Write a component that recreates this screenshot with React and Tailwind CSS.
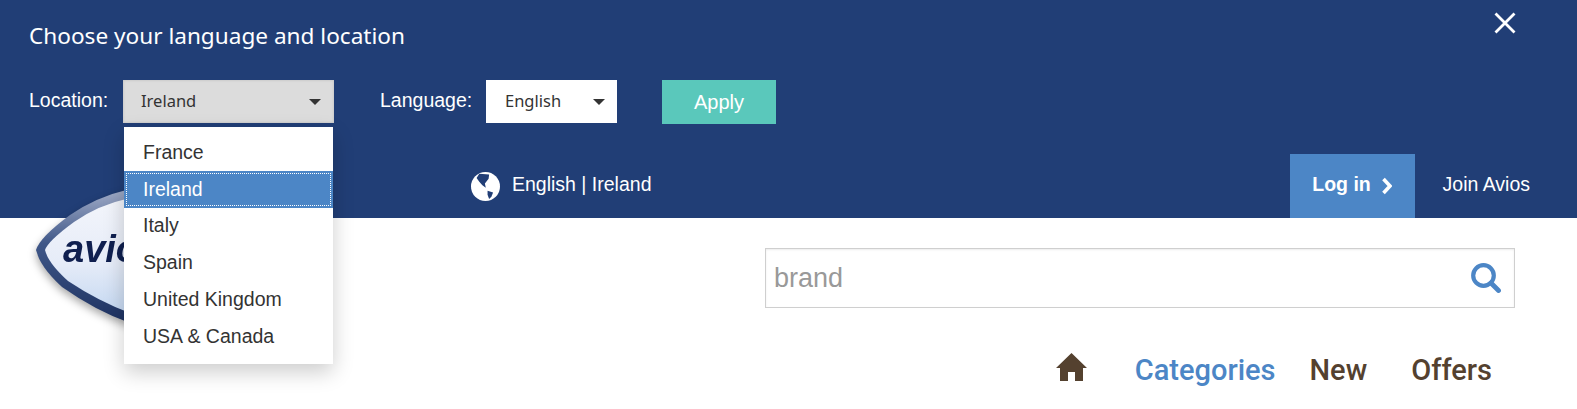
const countries = ["France", "Ireland", "Italy", "Spain", "United Kingdom", "USA & Canada"];

const arial = "font-['Liberation_Sans',Arial,sans-serif]";
const brand = "font-['Noto_Sans',sans-serif]";
const navFont = "font-['Roboto',sans-serif]";

const Caret = () => (
  <span className="w-0 h-0 border-x-[6px] border-x-transparent border-t-[6px] border-t-[#333]"></span>
);

const Globe = () => (
  <svg width="29" height="29" viewBox="0 0 28 28">
    <circle cx="14" cy="14" r="14" fill="#fff" />
    <path d="M8 1.6 L17.5 2.5 L17 6.4 L13.4 11 L14.3 15.3 L11 12.7 L8 9.5 L5.4 5.7 Z" fill="#213e76" />
    <path d="M16 18 L21.3 19.7 L19.7 23.9 L17.5 26 L16 22 Z" fill="#213e76" />
  </svg>
);

const Logo = () => (
  <svg width="200" height="170" viewBox="0 0 200 170" className="absolute left-[30px] top-[175px] drop-shadow-[0_4px_4px_rgba(0,0,0,0.35)]">
    <defs>
      <linearGradient id="face" x1="0" y1="0" x2="0" y2="1">
        <stop offset="0" stopColor="#f3f5fb" />
        <stop offset="0.55" stopColor="#e6ecf8" />
        <stop offset="1" stopColor="#c3d7f1" />
      </linearGradient>
      <linearGradient id="rim" x1="0" y1="0" x2="0" y2="1">
        <stop offset="0" stopColor="#a3aec9" />
        <stop offset="0.4" stopColor="#3f5788" />
        <stop offset="1" stopColor="#1d3160" />
      </linearGradient>
    </defs>
    <path d="M6 75 Q10 62 40 40 Q66 22 100 14 L190 14 L190 150 L100 148 Q66 136 32 112 Q10 92 6 75 Z" fill="url(#rim)" />
    <path d="M15 75 Q18 66 44 47 Q68 30 100 23 L190 23 L190 140 L100 138 Q68 126 38 106 Q18 88 15 75 Z" fill="url(#face)" />
    <text x="33" y="87" fontFamily="'Liberation Sans', Arial, sans-serif" fontStyle="italic" fontWeight="700" fontSize="38" fill="#0f1f4f">
      avios
    </text>
  </svg>
);

const App = () => {
  return (
    <div className={`relative w-[1577px] h-[409px] overflow-hidden bg-white ${arial}`}>
      {/* blue header */}
      <div className="h-[218px] bg-[#213e76] text-white">
        <div className="flex justify-between pl-[29px] pr-[61px] pt-[23px]">
          <h2 className={`text-[22.6px] leading-[26px] ${brand}`}>Choose your language and location</h2>
          <svg width="22" height="22" viewBox="0 0 22 22" className="-mt-[11px]" stroke="#fff" strokeWidth="2.8" fill="none">
            <path d="M1.5 1.5 L20.5 20.5 M20.5 1.5 L1.5 20.5" />
          </svg>
        </div>

        <div className="flex items-start pl-[29px] mt-[31px] h-[44px]">
          <span className="text-[19.5px] leading-[40px] w-[94px]">Location:</span>
          <div className={`flex items-center justify-between w-[211px] h-[43px] bg-[#dcdcdc] shadow-[inset_0_0_3px_rgba(0,0,0,0.15)] pl-[18px] pr-[13px] text-[#333] text-[16.5px] ${brand}`}>
            Ireland
            <Caret />
          </div>
          <span className="text-[19.5px] leading-[40px] ml-[46px] w-[106px]">Language:</span>
          <div className={`flex items-center justify-between w-[131px] h-[43px] bg-white pl-[19px] pr-[12px] text-[#333] text-[16.5px] ${brand}`}>
            English
            <Caret />
          </div>
          <button className="ml-[45px] w-[114px] h-[44px] bg-[#5ac8bb] text-white text-[20px]">Apply</button>
        </div>

        <div className="flex mt-[30px] h-[64px]">
          <div className="flex items-center gap-[12px] ml-[471px] text-[19.5px]">
            <Globe />
            <span className="-mt-[2px]">English | Ireland</span>
          </div>
          <div className="flex ml-auto pr-[47px]">
            <a className="flex items-center justify-center gap-[11px] w-[125px] bg-[#4c86c6] text-[19.5px] font-bold">
              <span className="-mt-[2px]">Log in</span>
              <svg width="10" height="18" viewBox="0 0 10 18" fill="none" stroke="#fff" strokeWidth="3.6">
                <path d="M1.5 2 L8 9 L1.5 16" />
              </svg>
            </a>
            <a className="flex items-center pl-[28px] text-[19.5px] -mt-[2px]">Join Avios</a>
          </div>
        </div>
      </div>

      <Logo />

      {/* search + nav */}
      <div className="relative flex flex-col items-end pr-[62px] pt-[30px]">
        <div className="flex items-center justify-between w-[750px] h-[60px] bg-white border border-[#cfcfcf] pl-[8px] pr-[13px] shadow-[inset_0_1px_2px_rgba(0,0,0,0.08)]">
          <span className="text-[27px] text-[#999] mt-[1px]">brand</span>
          <svg width="30" height="30" viewBox="0 0 30 30" fill="none" stroke="#4c86c6">
            <circle cx="12.5" cy="12.5" r="10.3" strokeWidth="4.2" />
            <path d="M20 20 L27.5 27.5" strokeWidth="4.8" strokeLinecap="round" />
          </svg>
        </div>
        <nav className={`flex items-center h-[44px] mt-[40px] pr-[23px] text-[29px] leading-none font-medium text-[#54412f] ${navFont}`}>
          <svg width="31" height="28" viewBox="0 0 31 28" fill="#54412f" className="mr-[48px] -mt-[7px]">
            <path d="M15.5 0 L31 15 L27 15 L27 28 L19 28 L19 19 L12 19 L12 28 L4 28 L4 15 L0 15 Z" />
          </svg>
          <a className="text-[#4c86c6] mr-[34px]">Categories</a>
          <a className="mr-[44px]">New</a>
          <a>Offers</a>
        </nav>
      </div>

      {/* open location dropdown */}
      <ul className="absolute left-[124px] top-[127px] w-[209px] h-[237px] py-[7px] bg-white text-[#333] text-[19.5px] shadow-[0_8px_20px_rgba(0,0,0,0.2)]">
        {countries.map((c) =>
          c === "Ireland" ? (
            <li key={c} className="flex items-center h-[36.8px] pl-[19px] bg-[#4c86c6] text-white outline-1 -outline-offset-3 outline-dotted outline-white">
              {c}
            </li>
          ) : (
            <li key={c} className="flex items-center h-[36.8px] pl-[19px]">
              {c}
            </li>
          )
        )}
      </ul>
    </div>
  );
};

export default App;
